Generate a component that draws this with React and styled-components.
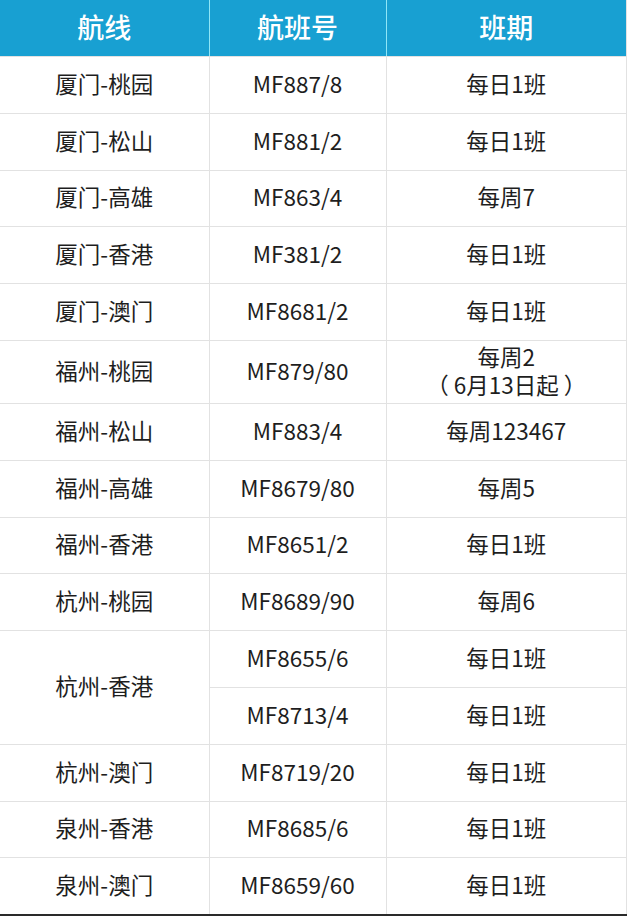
import React from "react";
import styled, { createGlobalStyle } from "styled-components";

const GlobalStyle = createGlobalStyle`
  html, body {
    margin: 0;
    padding: 0;
    background: #fff;
  }
  body {
    font-family: "Noto Sans CJK SC", "Noto Sans", sans-serif;
  }
`;

const Page = styled.div`
  width: 628px;
  height: 916px;
  overflow: hidden;
  background: #fff;
`;

const Table = styled.table`
  width: 627px;
  border-collapse: collapse;
  table-layout: fixed;
  border-right: 1px solid #e2e2e2;
  border-bottom: 2px solid #2a2a2a;
`;

const HeadCell = styled.th`
  height: 53px;
  padding: 0 0 3px;
  background: #18a0d2;
  color: #fff;
  font-size: 27px;
  font-weight: 500;
  text-align: center;
  border-left: ${(p) => (p.$first ? "none" : "1px solid #8fe6f7")};
  border-bottom: 1px solid #e2e2e2;
`;

const Cell = styled.td`
  height: ${(p) => (p.$tall ? 58 : 51.8)}px;
  padding: 0 0 4px;
  color: #1e1e1e;
  font-size: 22.5px;
  line-height: 28px;
  text-align: center;
  text-spacing-trim: space-all;
  border-left: ${(p) => (p.$first ? "none" : "1px solid #e2e2e2")};
  border-bottom: 1px solid #e2e2e2;
`;

const rows = [
  { route: "厦门-桃园", flights: [["MF887/8", "每日1班"]] },
  { route: "厦门-松山", flights: [["MF881/2", "每日1班"]] },
  { route: "厦门-高雄", flights: [["MF863/4", "每周7"]] },
  { route: "厦门-香港", flights: [["MF381/2", "每日1班"]] },
  { route: "厦门-澳门", flights: [["MF8681/2", "每日1班"]] },
  { route: "福州-桃园", flights: [["MF879/80", "每周2\n（ 6月13日起 ）"]], tall: true },
  { route: "福州-松山", flights: [["MF883/4", "每周123467"]] },
  { route: "福州-高雄", flights: [["MF8679/80", "每周5"]] },
  { route: "福州-香港", flights: [["MF8651/2", "每日1班"]] },
  { route: "杭州-桃园", flights: [["MF8689/90", "每周6"]] },
  {
    route: "杭州-香港",
    flights: [
      ["MF8655/6", "每日1班"],
      ["MF8713/4", "每日1班"],
    ],
  },
  { route: "杭州-澳门", flights: [["MF8719/20", "每日1班"]] },
  { route: "泉州-香港", flights: [["MF8685/6", "每日1班"]] },
  { route: "泉州-澳门", flights: [["MF8659/60", "每日1班"]] },
];

const MultiLine = ({ text }) =>
  text.split("\n").map((line, i) => (
    <React.Fragment key={i}>
      {i > 0 && <br />}
      {line}
    </React.Fragment>
  ));

export default function App() {
  return (
    <Page>
      <GlobalStyle />
      <Table>
        <colgroup>
          <col style={{ width: 209 }} />
          <col style={{ width: 177 }} />
          <col />
        </colgroup>
        <thead>
          <tr>
            <HeadCell $first>航线</HeadCell>
            <HeadCell>航班号</HeadCell>
            <HeadCell>班期</HeadCell>
          </tr>
        </thead>
        <tbody>
          {rows.map((row) =>
            row.flights.map(([no, days], i) => (
              <tr key={row.route + no}>
                {i === 0 && (
                  <Cell $first rowSpan={row.flights.length} $tall={row.tall}>
                    {row.route}
                  </Cell>
                )}
                <Cell $tall={row.tall}>{no}</Cell>
                <Cell $tall={row.tall}>
                  <MultiLine text={days} />
                </Cell>
              </tr>
            ))
          )}
        </tbody>
      </Table>
    </Page>
  );
}
